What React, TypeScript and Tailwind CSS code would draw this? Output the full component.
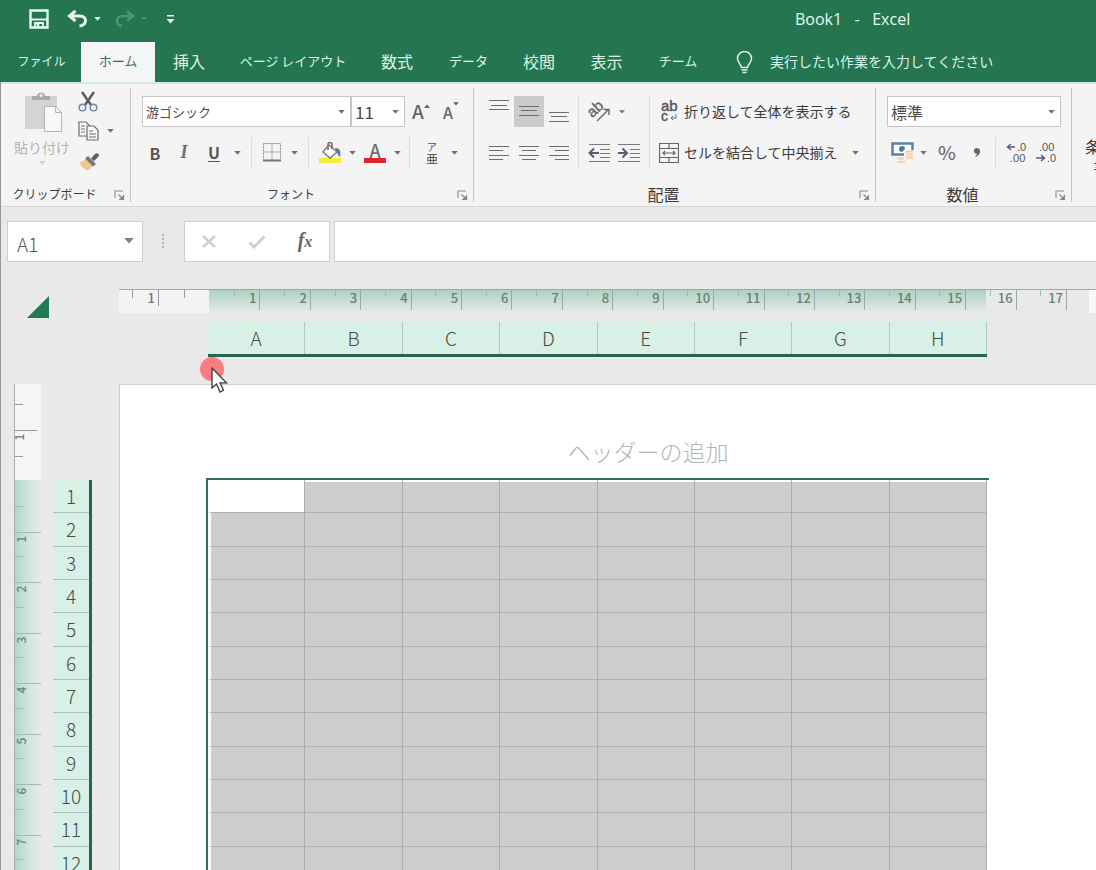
import React from "react";

const columns = ["A", "B", "C", "D", "E", "F", "G", "H"];
const rows = [1, 2, 3, 4, 5, 6, 7, 8, 9, 10, 11, 12];
const rulerMarks = [1, 2, 3, 4, 5, 6, 7, 8, 9, 10, 11, 12, 13, 14, 15, 16, 17];
const sideMarks = [1, 2, 3, 4, 5, 6, 7, 8];

const tabs = [
  { name: "ファイル", style: "w-[79px] text-[12px]" },
  { name: "ホーム", style: "w-[74px] text-[13px] bg-[#f6f5f6] text-[#3f6b58]" },
  { name: "挿入", style: "w-[68px] text-[16px]" },
  { name: "ページ レイアウト", style: "w-[140px] text-[13px]" },
  { name: "数式", style: "w-[68px] text-[16px]" },
  { name: "データ", style: "w-[75px] text-[13px]" },
  { name: "校閲", style: "w-[66px] text-[16px]" },
  { name: "表示", style: "w-[69px] text-[16px]" },
  { name: "チーム", style: "w-[74px] text-[13px]" },
];

const Caret: React.FC<{ className?: string }> = ({ className = "h-1 w-[7px]" }) => (
  <svg viewBox="0 0 8 5" className={`shrink-0 ${className}`} fill="currentColor">
    <path d="M0 0h8L4 4.6z" />
  </svg>
);

const IconButton: React.FC<{
  label: string;
  className: string;
  children: React.ReactNode;
}> = ({ label, className, children }) => (
  <button aria-label={label} className={`flex h-full shrink-0 items-center justify-center ${className}`}>
    {children}
  </button>
);

const Separator: React.FC = () => <span className="mx-1.5 w-px shrink-0 self-stretch bg-[#dcdcdc]" />;

const SelectBox: React.FC<{
  label: string;
  value: string;
  className: string;
}> = ({ label, value, className }) => (
  <div className={`relative h-full shrink-0 border border-[#c6c6c6] bg-white ${className}`}>
    <select
      aria-label={label}
      defaultValue={value}
      className="h-full w-full appearance-none bg-transparent pl-[3px] text-[#4a4a4a] outline-none"
    >
      <option>{value}</option>
    </select>
    <Caret className="pointer-events-none absolute right-[5px] top-[13px] h-1 w-[7px] text-[#707070]" />
  </div>
);

const RibbonGroup: React.FC<{
  title: string;
  titleStyle: string;
  className: string;
  children: React.ReactNode;
}> = ({ title, titleStyle, className, children }) => (
  <section className={`flex shrink-0 flex-col ${className}`}>
    <div className="h-[92px]">{children}</div>
    <div className="flex h-6 items-end">
      <span className={`flex-1 text-center leading-4 ${titleStyle}`}>{title}</span>
      <button aria-label={`${title}の設定`} className="flex w-[22px] justify-start pb-px pl-1.5">
        <svg width="11" height="11" viewBox="0 0 11 11" fill="none" stroke="#8a8a8a" strokeWidth="1.1">
          <path d="M1 8V1h8M4.5 4.5l4 4M9.5 5v4.5H5" />
          <path d="M9.5 6v3.5H6z" fill="#777" />
        </svg>
      </button>
    </div>
  </section>
);

const Lines: React.FC<{ d: string }> = ({ d }) => (
  <svg width="20" height="31" viewBox="0 0 20 31" stroke="#6d6d6d" strokeWidth="1.2" fill="none">
    <path d={d} />
  </svg>
);

const TitleBar: React.FC = () => (
  <header className="flex h-[42px] items-center pl-[29px] pb-1 text-[#e8fbf1]">
    <button aria-label="上書き保存">
      <svg width="20" height="20" viewBox="0 0 20 20" fill="none" stroke="currentColor" strokeWidth="2.4">
        <path d="M1.5 1.5h17v17h-17z" />
        <path d="M2 10.500h16" strokeWidth="2" />
        <path d="M6 18.500v-4.500h8v4.500" strokeWidth="1.800" />
        <path d="M9 15v3" strokeWidth="2.500" />
      </svg>
    </button>
    <button aria-label="元に戻す" className="ml-[18px] flex items-center gap-1.5">
      <svg width="21" height="18" viewBox="0 0 21 18" fill="none" stroke="currentColor" strokeWidth="3">
        <path d="M2.5 6H13c3.500 0 5.500 2 5.500 4.500S16.500 15.500 12.500 16" />
        <path d="M8.500 0.800L2.500 6l6 5" />
      </svg>
      <Caret />
    </button>
    <button aria-label="やり直し" className="ml-[14px] flex items-center gap-1.5 text-[#4c9674]">
      <svg width="20" height="18" viewBox="0 0 20 18" fill="none" stroke="currentColor" strokeWidth="2.500">
        <path d="M18 6H8C4.500 6 2 8 2 11s2 4.500 5 5" />
        <path d="M12 1l6 5-6 5" />
      </svg>
      <Caret className="h-1 w-[6px]" />
    </button>
    <button aria-label="クイック アクセス ツール バーのカスタマイズ" className="ml-[19px]">
      <svg width="9" height="9" viewBox="0 0 9 9" fill="currentColor">
        <path d="M1 0h7v1.500H1zM0.500 4h8L4.500 8.500z" />
      </svg>
    </button>
    <h1 className="ml-[620px] whitespace-pre font-['Open_Sans','Noto_Sans_CJK_JP',sans-serif] text-[16px]">
      {"Book1   -   Excel"}
    </h1>
  </header>
);

const TabBar: React.FC = () => (
  <nav className="flex h-10 items-stretch whitespace-nowrap pl-0.5 text-[#dcf5e8]">
    {tabs.map((tab) => (
      <button key={tab.name} className={`shrink-0 pb-0.5 ${tab.style}`}>
        {tab.name}
      </button>
    ))}
    <label className="ml-[21px] flex flex-1 items-center">
      <svg width="17" height="23" viewBox="0 0 17 23" fill="none" stroke="currentColor" strokeWidth="1.500" className="shrink-0">
        <path d="M5.500 16.500c0-3-4-4.500-4-9a7 7 0 0 1 14 0c0 4.500-4 6-4 9zM5.500 19h6M6.500 21.500h4" />
      </svg>
      <input
        aria-label="操作アシスト"
        placeholder="実行したい作業を入力してください"
        className="ml-[17px] min-w-0 flex-1 bg-transparent pb-0.5 text-[14px] outline-none placeholder:text-[#dcf5e8]"
      />
    </label>
  </nav>
);

const ClipboardGroup: React.FC = () => (
  <RibbonGroup title="クリップボード" titleStyle="text-[12px]" className="w-[129px]">
    <div className="flex pl-3">
      <button className="flex w-[58px] flex-col items-center pt-1 text-[14px] leading-5 text-[#b3b3b3]">
        <svg width="38" height="41" viewBox="0 0 38 41" className="ml-1">
          <path d="M0 4h32v33H0z" fill="#d5d4d5" />
          <path d="M7 8V4h5c0-4.500 8-4.500 8 0h5v4z" fill="#a9a9a9" />
          <circle cx="16" cy="3.500" r="1.500" fill="#f4f3f4" />
          <path d="M19.500 14.500h11l6 6v19h-17z" fill="#f8f8f8" stroke="#b5b5b5" />
          <path d="M30.500 14.500v6h6" fill="none" stroke="#b5b5b5" />
        </svg>
        <span className="mt-1">貼り付け</span>
        <Caret className="mt-1 h-1 w-[7px] text-[#cfcfcf]" />
      </button>
      <div className="flex flex-col items-start pl-[7px] text-[#707070]">
        <button aria-label="切り取り" className="flex h-[26px] items-center">
          <svg width="20" height="21" viewBox="0 0 20 21" fill="none">
            <path d="M4 1l9 13M16 1L7 14" stroke="#5f5f5f" strokeWidth="2.500" />
            <circle cx="4.500" cy="16.500" r="3.300" stroke="#7389ae" strokeWidth="1.500" />
            <circle cx="15.500" cy="16.500" r="3.300" stroke="#7389ae" strokeWidth="1.500" />
          </svg>
        </button>
        <button aria-label="コピー" className="flex h-[34px] items-center gap-2">
          <svg width="21" height="20" viewBox="0 0 21 20" fill="#f8f8f8" stroke="#6b6b74" strokeWidth="1.200">
            <path d="M1 1h7l3 3v11H1z" />
            <path d="M9 5h7l4 4v10H9z" />
            <path d="M3 5h4M3 8h4M3 11h4M11 10h4M11 13h7M11 16h7" />
          </svg>
          <Caret />
        </button>
        <button aria-label="書式のコピー/貼り付け" className="flex h-[26px] items-center">
          <svg width="22" height="19" viewBox="0 0 22 19">
            <path d="M1 11l7-4 7 7-5 4.500c-3-.500-6-3-9-7.500z" fill="#ecc78f" />
            <path d="M7 6.500l3-2.500 8 8-3 2.500z" fill="#77777b" />
            <path d="M13 6.500l4-4.500c2-2 5 0 3.500 2.500L16 9z" fill="#5f5f63" />
          </svg>
        </button>
      </div>
    </div>
  </RibbonGroup>
);

const FontGroup: React.FC = () => (
  <RibbonGroup title="フォント" titleStyle="text-[12px]" className="w-[343px] border-l border-[#c4c4c4]">
    <div className="ml-[11px] flex h-[39px] pt-2">
      <SelectBox label="フォント" value="游ゴシック" className="w-[209px] text-[13px]" />
      <SelectBox label="フォント サイズ" value="11" className="w-[54px] text-[17px]" />
      <IconButton label="フォント サイズの拡大" className="w-8 text-[19px] font-medium text-[#666]">
        A<Caret className="mb-3 h-1 w-[6px] rotate-180" />
      </IconButton>
      <IconButton label="フォント サイズの縮小" className="w-7 text-[16px] font-medium text-[#666]">
        A<Caret className="mb-4 h-1 w-[6px]" />
      </IconButton>
    </div>
    <div className="ml-[10px] mt-[10px] flex h-[31px] text-[#707070]">
      <IconButton label="太字" className="w-7 text-[16px] font-bold text-[#555]">B</IconButton>
      <IconButton label="斜体" className="w-[30px] font-['Liberation_Serif',serif] text-[18px] font-bold italic">I</IconButton>
      <IconButton label="下線" className="w-[30px] text-[16px] font-bold text-[#555]">
        <span className="border-b border-[#555] leading-[17px]">U</span>
      </IconButton>
      <IconButton label="下線の種類" className="w-4"><Caret /></IconButton>
      <Separator />
      <IconButton label="罫線" className="w-7">
        <svg width="18" height="19" viewBox="0 0 18 19" fill="none" stroke="#8f8f8f">
          <path d="M0.500 0.500h17v17M0.500 0.500v17M9 0.500v17M0.500 9h17" strokeDasharray="2 1" />
          <path d="M0 17.500h18" strokeWidth="2" stroke="#777" />
        </svg>
      </IconButton>
      <IconButton label="罫線の種類" className="w-4"><Caret /></IconButton>
      <Separator />
      <IconButton label="塗りつぶしの色" className="w-[30px]">
        <svg width="23" height="22" viewBox="0 0 23 22">
          <path d="M0 16h22v5H0z" fill="#f5ec3d" />
          <path d="M10 3l8 7-7 6-7-6z" fill="#fff" stroke="#77777d" strokeWidth="1.400" />
          <path d="M9 8V2c0-2 4-2 4 0v5" fill="none" stroke="#8a5a50" strokeWidth="1.400" />
          <path d="M16 6c5 0 6 3 5 9-2-1-2-4-4-6z" fill="#5f7593" />
        </svg>
      </IconButton>
      <IconButton label="塗りつぶしの色の一覧" className="w-3.5"><Caret /></IconButton>
      <IconButton label="フォントの色" className="w-8 flex-col text-[18px] font-medium">
        <span className="leading-[15px]">A</span>
        <span className="h-[5px] w-[22px] bg-[#e0232c]" />
      </IconButton>
      <IconButton label="フォントの色の一覧" className="w-3"><Caret /></IconButton>
      <Separator />
      <IconButton label="ふりがなの表示" className="w-8 flex-col text-[#4a4a4a]">
        <span className="text-[10px] leading-[11px]">ア</span>
        <span className="text-[12px] leading-[13px]">亜</span>
      </IconButton>
      <IconButton label="ふりがなの設定" className="w-3"><Caret /></IconButton>
    </div>
  </RibbonGroup>
);

const AlignmentGroup: React.FC = () => (
  <RibbonGroup title="配置" titleStyle="text-[16px]" className="w-[402px] border-l border-[#c4c4c4]">
    <div className="flex h-20 pl-[10px] pt-2 text-[#707070]">
      <div className="grid grid-cols-[30px_30px_30px] grid-rows-[31px_31px] gap-y-[10px]">
        <IconButton label="上揃え" className="w-[30px]"><Lines d="M0 4.500h20M2 9.500h16M0 13.500h20" /></IconButton>
        <IconButton label="上下中央揃え" className="w-[30px] bg-[#cbcbcb]"><Lines d="M0 10.500h20M2 14.500h16M0 19.500h20" /></IconButton>
        <IconButton label="下揃え" className="w-[30px]"><Lines d="M0 16.500h20M2 20.500h16M0 25.500h20" /></IconButton>
        <IconButton label="左揃え" className="w-[30px]"><Lines d="M0 9.500h20M0 13.500h14M0 18.500h20M0 22.500h14" /></IconButton>
        <IconButton label="中央揃え" className="w-[30px]"><Lines d="M0 9.500h20M3 13.500h14M0 18.500h20M3 22.500h14" /></IconButton>
        <IconButton label="右揃え" className="w-[30px]"><Lines d="M0 9.500h20M6 13.500h14M0 18.500h20M6 22.500h14" /></IconButton>
      </div>
      <span className="ml-1 w-px bg-[#dcdcdc]" />
      <div className="ml-[5px] w-[60px]">
        <div className="flex h-[31px]">
          <IconButton label="方向" className="w-[30px]">
            <svg width="26" height="26" viewBox="0 0 26 26" className="overflow-visible">
              <text
                x="3"
                y="15"
                transform="rotate(-42 10 13)"
                fontSize="15"
                fontFamily="Liberation Sans"
                stroke="#666"
                strokeWidth="0.4"
                fill="#666"
              >
                ab
              </text>
              <path d="M11 22L22 11M17.500 10.500H23V16" fill="none" stroke="#666" strokeWidth="1.400" />
            </svg>
          </IconButton>
          <IconButton label="方向の一覧" className="w-4"><Caret className="h-1 w-[6px]" /></IconButton>
        </div>
        <div className="mt-[10px] flex h-[31px]">
          <IconButton label="インデントを減らす" className="w-[30px]">
            <svg width="22" height="20" viewBox="0 0 22 20" fill="none" stroke="#7a7a7a" strokeWidth="1.200">
              <path d="M1 1.500h21M12 6.500h10M12 10.500h10M12 14.500h10M1 18.500h21" />
              <path d="M11 10H2M6 5.500L1.500 10 6 14.500" stroke="#4d5f7d" strokeWidth="2" />
            </svg>
          </IconButton>
          <IconButton label="インデントを増やす" className="w-[30px]">
            <svg width="22" height="20" viewBox="0 0 22 20" fill="none" stroke="#7a7a7a" strokeWidth="1.200">
              <path d="M0 1.500h22M12 6.500h10M12 10.500h10M12 14.500h10M0 18.500h22" />
              <path d="M0 10h8M4.500 5.500L9 10l-4.500 4.500" stroke="#4d5f7d" strokeWidth="2" />
            </svg>
          </IconButton>
        </div>
      </div>
      <span className="ml-[5px] w-px bg-[#dcdcdc]" />
      <div className="ml-[9px] whitespace-nowrap text-[14px] text-[#3c3c3c]">
        <button className="flex h-[31px] items-center gap-[5px]">
          <svg width="20" height="27" viewBox="0 0 20 27" fontFamily="Liberation Sans" fontSize="15" fill="#555" stroke="#555" strokeWidth="0.4">
            <text x="2" y="13">ab</text>
            <text x="2" y="23" fontSize="14">c</text>
            <path d="M17 16v4h-5M14 18l-2 2 2 2" fill="none" stroke="#5a6880" strokeWidth="1" />
          </svg>
          折り返して全体を表示する
        </button>
        <div className="mt-[10px] flex h-[31px]">
          <button className="flex items-center gap-[5px]">
            <svg width="20" height="20" viewBox="0 0 20 20" fill="none" stroke="#666" strokeWidth="1.200">
              <path d="M0.500 0.500h19v19H0.500zM0.500 5.500h19M0.500 14.500h19M10 0.500v5M10 14.500v5M4 10h12M6 8l-2 2 2 2M14 8l2 2-2 2" />
            </svg>
            セルを結合して中央揃え
          </button>
          <IconButton label="結合の種類" className="ml-2.5 w-4 text-[#707070]"><Caret /></IconButton>
        </div>
      </div>
    </div>
  </RibbonGroup>
);

const NumberGroup: React.FC = () => (
  <RibbonGroup title="数値" titleStyle="text-[16px]" className="w-[196px] border-l border-[#c4c4c4]">
    <div className="ml-[11px] flex h-[39px] pt-2">
      <SelectBox label="表示形式" value="標準" className="w-[174px] text-[16px]" />
    </div>
    <div className="ml-[11px] mt-[10px] flex h-[31px] text-[#707070]">
      <IconButton label="通貨表示形式" className="w-[30px]">
        <svg width="23" height="22" viewBox="0 0 23 22">
          <path d="M1.500 1.500h20v11h-20z" fill="#fff" stroke="#5583b3" strokeWidth="2.500" />
          <path d="M14 7a3 3 0 1 0-3 3" fill="#4f78a8" />
          <path d="M13 8h10v14H4v-7h9z" fill="#f5f4f5" />
          <path d="M15 9.500h7M15 12.500h7M15 15.500h7M6 16.500h7M6 20h8" stroke="#f6cfa2" strokeWidth="2" />
        </svg>
      </IconButton>
      <IconButton label="通貨の種類" className="w-3"><Caret /></IconButton>
      <IconButton label="パーセント スタイル" className="w-9 text-[19px] font-medium">%</IconButton>
      <IconButton label="桁区切りスタイル" className="w-6">
        <svg width="8" height="9" viewBox="0 0 9 10" fill="#666">
          <path d="M1 3.300C1 1.300 2.300 0 4.300 0S8 1.500 8 3.500C8 6.500 6 9 2 10c1.500-1.300 2.500-2.300 2.500-3.500C2.500 6.500 1 5.200 1 3.300z" />
        </svg>
      </IconButton>
      <Separator />
      <IconButton label="小数点以下の表示桁数を増やす" className="w-[29px]">
        <svg width="22" height="25" viewBox="0 0 22 25" fill="#555" fontFamily="Liberation Sans" fontSize="11">
          <text x="11" y="11">.0</text>
          <text x="4" y="22">.00</text>
          <path d="M9 7H2M5 4L1.500 7 5 10" fill="none" stroke="#5b5680" strokeWidth="1.400" />
        </svg>
      </IconButton>
      <IconButton label="小数点以下の表示桁数を減らす" className="w-[29px]">
        <svg width="22" height="25" viewBox="0 0 22 25" fill="#555" fontFamily="Liberation Sans" fontSize="11">
          <text x="4" y="11">.00</text>
          <text x="12" y="22">.0</text>
          <path d="M1 18h8M6 15l3.500 3L6 21" fill="none" stroke="#5b5680" strokeWidth="1.400" />
        </svg>
      </IconButton>
    </div>
  </RibbonGroup>
);

const FormulaBar: React.FC = () => (
  <div className="flex h-[41px] shrink-0 pl-1.5">
    <div className="relative w-[136px] shrink-0 border border-[#cfcfcf] bg-white">
      <input
        aria-label="名前ボックス"
        defaultValue="A1"
        className="h-full w-full bg-transparent pl-[9px] pt-1 text-[19px] font-light text-[#555] outline-none"
      />
      <Caret className="pointer-events-none absolute right-2 top-4 h-[6px] w-[10px] text-[#808080]" />
    </div>
    <svg width="41" height="40" viewBox="0 0 41 40" fill="#b5b5b5" className="shrink-0">
      <path d="M19 13h2v2h-2zM19 17h2v2h-2zM19 21h2v2h-2zM19 25h2v2h-2z" />
    </svg>
    <div className="flex w-[146px] shrink-0 border border-[#cfcfcf] bg-white">
      <IconButton label="キャンセル" className="w-12">
        <svg width="14" height="13" viewBox="0 0 14 13" fill="none" stroke="#cfcfcf" strokeWidth="2.500">
          <path d="M1 1l12 11M13 1L1 12" />
        </svg>
      </IconButton>
      <IconButton label="入力" className="w-12">
        <svg width="18" height="14" viewBox="0 0 18 14" fill="none" stroke="#cfcfcf" strokeWidth="3">
          <path d="M1.500 7.500l4.500 4.500L16.500 1.500" />
        </svg>
      </IconButton>
      <IconButton label="関数の挿入" className="w-12 pb-1 font-['Liberation_Serif',serif] text-[20px] font-bold italic text-[#666]">
        f<span className="pt-1 text-[16px]">x</span>
      </IconButton>
    </div>
    <input aria-label="数式バー" className="ml-1 min-w-0 flex-1 border border-r-0 border-[#cfcfcf] bg-white px-2 outline-none" />
  </div>
);

const TopRuler: React.FC = () => (
  <div className="flex h-6 overflow-hidden border-t border-[#a5a5a5] text-[13px] font-medium leading-4 text-[#6b7f77]">
    <div className="flex w-[90px] shrink-0 bg-[#f5f4f5]">
      <span className="h-2 w-[14px] border-r border-[#999]" />
      <span className="h-4 w-[26px] border-r border-[#999] pr-[3px] text-right">1</span>
      <span className="h-2 w-[26px] border-r border-[#999]" />
    </div>
    <div className="relative flex w-[880px] shrink-0">
      <div className="w-[777px] bg-linear-to-b from-[#abd2c3] to-[#e9e9e9]" />
      <div className="flex-1" />
      <div className="absolute inset-y-0 left-px grid w-[857px] grid-cols-17">
        {rulerMarks.map((mark) => (
          <div key={mark} className="flex h-5 border-r border-[#9aa9a3]">
            <span className="h-1.5 w-1/2 border-r border-[#9dbdb1]" />
            <span className="flex w-1/2 justify-end pr-[3px]">{mark}</span>
          </div>
        ))}
      </div>
    </div>
    <div className="flex-1 bg-[#f8f8f8]" />
  </div>
);

const SideRuler: React.FC = () => (
  <div className="w-[27px] shrink-0 border-l border-[#a5b0ab] text-[12px] font-medium text-[#6b7f77]">
    <div className="h-24 bg-[#f6f5f6]">
      <div className="h-[21px] w-2 border-b border-[#999]" />
      <div className="h-[26px] w-[22px] border-b border-[#999]" />
      <div className="flex h-[26px] w-2 border-b border-[#999]">
        <span className="block w-3 -rotate-90 self-start text-center leading-3">1</span>
      </div>
    </div>
    <div className="grid h-[406px] grid-rows-8 bg-linear-to-r from-[#b2d7ca] via-[#cfe6dd] to-[#e9e9e9] pt-0.5">
      {sideMarks.map((mark) => (
        <div key={mark} className="flex flex-col border-b border-[#a3bab0]">
          <div className="h-1/2 w-2 border-b border-[#9dbdb1]">
            {mark > 1 && <span className="block w-3 -rotate-90 text-center leading-3">{mark - 1}</span>}
          </div>
        </div>
      ))}
    </div>
  </div>
);

const Sheet: React.FC = () => (
  <main className="relative flex min-h-0 flex-1 flex-col pt-[27px]">
    <div className="flex h-[95px] shrink-0">
      <button aria-label="すべて選択" className="flex w-[118px] shrink-0 items-start pl-[26px] pt-[7px]">
        <svg width="23" height="23" viewBox="0 0 23 23" fill="#217a55">
          <path d="M22 0v22H0z" />
        </svg>
      </button>
      <div className="min-w-0 flex-1">
        <TopRuler />
        <div className="ml-[89px] mt-[9px] grid h-[35px] w-[779px] grid-cols-8 border-b-[3px] border-[#26664d] bg-[#d9f0e7]">
          {columns.map((name) => (
            <div key={name} className="border-r border-[#b3c9c0] text-center text-[19px] font-light leading-8 text-[#3c5048]">
              {name}
            </div>
          ))}
        </div>
      </div>
    </div>

    <div className="flex min-h-0 flex-1 overflow-hidden">
      <div className="flex w-[118px] shrink-0 items-start pl-[13px]">
        <SideRuler />
        <div className="ml-3 mt-24 grid h-[400px] w-[39px] shrink-0 grid-rows-12 border-r-[3px] border-[#26664d] bg-[#d9f0e7]">
          {rows.map((row) => (
            <div key={row} className="flex items-center justify-center border-b border-[#a9c2b8] text-[19px] font-light leading-6 text-[#3c5048]">
              {row}
            </div>
          ))}
        </div>
      </div>

      <div className="min-w-0 flex-1 border-l border-t border-[#cfcfcf] bg-white pl-[86px]">
        <button className="block h-[93px] w-[884px] shrink-0 pt-10 text-[23px] font-light text-[#b5b5b5]">
          ヘッダーの追加
        </button>
        <div className="w-[783px] border-l-2 border-t-2 border-[#2f7058] pr-0.5">
          <table className="h-[400px] w-full table-fixed border-separate border-spacing-0">
            <tbody>
              {rows.map((row) => (
                <tr key={row}>
                  {columns.map((column) => (
                    <td
                      key={column}
                      className={`border-b border-r border-b-[#b2b2b2] border-r-[#adadad] p-0 first:border-l-[3px] first:border-l-white ${
                        row === 1 ? "shadow-[inset_0_2px_0_white]" : ""
                      } ${row === 1 && column === "A" ? "bg-white" : "bg-[#cdcdcd]"}`}
                    />
                  ))}
                </tr>
              ))}
            </tbody>
          </table>
        </div>
      </div>
    </div>

    {/* mouse pointer with click highlight */}
    <svg width="30" height="40" viewBox="0 0 30 40" className="pointer-events-none absolute left-[198px] top-[94px]">
      <circle cx="13" cy="13" r="12" fill="#fa7d82" />
      <path d="M13 12v20l4.500-4 3.500 8 3.500-1.700-3.500-7.500h6.500z" fill="#fff" stroke="#3a3a3a" strokeWidth="1.300" />
    </svg>
  </main>
);

export default function App() {
  return (
    <div className="flex h-screen flex-col overflow-hidden bg-[#e9e9e9] font-['Noto_Sans_CJK_JP','Noto_Sans',sans-serif]">
      <div className="shrink-0 bg-[#247550]">
        <TitleBar />
        <TabBar />
      </div>
      <div className="flex min-h-0 flex-1 flex-col border-l border-[#8f9896]">
        <div className="flex h-[125px] shrink-0 overflow-hidden border-b border-t-2 border-b-[#d6d6d6] border-t-[#d3e9e0] bg-[#f5f4f5] pb-1 pt-1 text-[#3c3c3c]">
          <ClipboardGroup />
          <FontGroup />
          <AlignmentGroup />
          <NumberGroup />
          <div className="flex min-w-0 flex-1 border-l border-[#c4c4c4] pl-[13px] pt-12">
            <button className="shrink-0 self-start whitespace-nowrap text-[16px] leading-[21px]">
              <span className="block">条件付き</span>
              <span className="flex items-center justify-center gap-2">
                書式
                <Caret />
              </span>
            </button>
          </div>
        </div>
        <div className="mt-[14px] flex min-h-0 flex-1 flex-col">
          <FormulaBar />
          <Sheet />
        </div>
      </div>
    </div>
  );
}
